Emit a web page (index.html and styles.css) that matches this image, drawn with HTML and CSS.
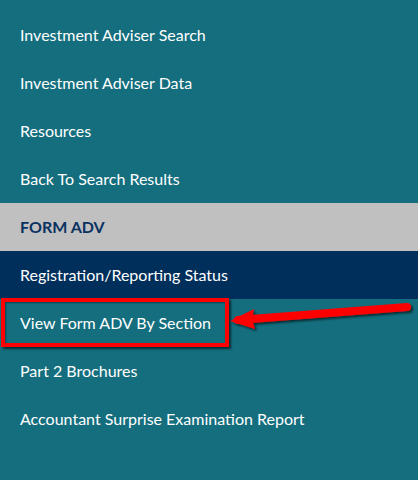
FILE: index.html
```html
<!DOCTYPE html>
<html lang="en">
<head>
    <meta charset="UTF-8">
    <meta name="viewport" content="width=device-width, initial-scale=1.0">
    <title>Investment Adviser Menu</title>
    <link rel="stylesheet" href="styles.css">
</head>
<body>

    <nav class="sidenav">
        <a href="#" class="item">Investment Adviser Search</a>
        <a href="#" class="item">Investment Adviser Data</a>
        <a href="#" class="item">Resources</a>
        <a href="#" class="item">Back To Search Results</a>
        <div class="item heading">FORM ADV</div>
        <a href="#" class="item active">Registration/Reporting Status</a>
        <a href="#" class="item">View Form ADV By Section</a>
        <a href="#" class="item">Part 2 Brochures</a>
        <a href="#" class="item">Accountant Surprise Examination Report</a>
    </nav>

    <!-- annotation: box + arrow -->
    <div class="callout-box"></div>
    <svg class="callout-arrow" width="200" height="50" viewBox="0 0 200 50">
        <defs>
            <filter id="shadow" x="-10%" y="-30%" width="130%" height="180%">
                <feDropShadow dx="2" dy="2" stdDeviation="1" flood-color="#000" flood-opacity="0.6"/>
            </filter>
        </defs>
        <g filter="url(#shadow)" fill="#ff0000">
            <path d="M10 30 L179 17" stroke="#ff0000" stroke-width="8" stroke-linecap="round" fill="none"/>
            <path d="M2 31 L26 19 L24 29 L27 39 Z"/>
        </g>
    </svg>

</body>
</html>
```

FILE: styles.css
```css
body {
    margin: 0;
    background-color: #146e7e;
    font-family: Lato, "Open Sans", sans-serif;
    height: 480px;
    position: relative;
    overflow: hidden;
}
.sidenav {
    display: flex;
    flex-direction: column;
    padding-top: 11px;
}
.item {
    display: block;
    height: 48px;
    line-height: 48px;
    padding-left: 20px;
    font-size: 16px;
    color: #ffffff;
    text-decoration: none;
}
.heading {
    background-color: #c0c0c0;
    color: #0a3260;
    font-weight: bold;
}
.active {
    background-color: #002f5c;
}
.callout-box {
    position: absolute;
    left: 1px;
    top: 298px;
    width: 220px;
    height: 41px;
    border: 4px solid #ff0000;
    box-shadow: 2px 2px 2px rgba(0, 0, 0, 0.6), inset 1px 1px 2px rgba(0, 0, 0, 0.4);
}
.callout-arrow {
    position: absolute;
    left: 228px;
    top: 290px;
}
```
